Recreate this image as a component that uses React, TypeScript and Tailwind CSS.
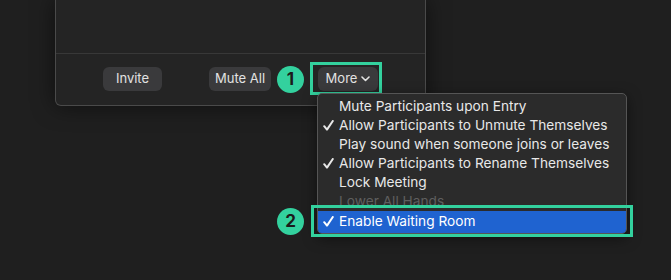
const font = { fontFamily: "Inter, 'Noto Sans', sans-serif" }

type Item = { label: string; checked?: boolean; disabled?: boolean }

const items: Item[] = [
  { label: "Mute Participants upon Entry" },
  { label: "Allow Participants to Unmute Themselves", checked: true },
  { label: "Play sound when someone joins or leaves" },
  { label: "Allow Participants to Rename Themselves", checked: true },
  { label: "Lock Meeting" },
  { label: "Lower All Hands", disabled: true },
]

function Check(props: { on?: boolean }) {
  return (
    <span className="flex w-[21px] items-center pl-[5px]">
      {props.on && (
        <svg width="11" height="11" viewBox="0 0 11 11" fill="none">
          <path d="M1.2 6.2L4 9.6L9.8 1" stroke="currentColor" strokeWidth="2" strokeLinecap="round" strokeLinejoin="round" />
        </svg>
      )}
    </span>
  )
}

function Badge(props: { n: number; className: string }) {
  return (
    <div
      className={`absolute flex h-[27px] w-[27px] items-center justify-center rounded-full bg-[#33d19e] text-[17px] font-bold text-[#1b1b1b] ${props.className}`}
    >
      {props.n}
    </div>
  )
}

export default function App() {
  return (
    <div className="relative h-[280px] w-[671px] overflow-hidden bg-[#1f1f1f]" style={font}>
      {/* participants panel */}
      <div className="ml-[55px] w-[371px] rounded-b-[6px] border-x border-b border-[#4a4a4a] bg-[#242424] shadow-[0_0_22px_rgba(0,0,0,0.55)]">
        <div className="h-[54px] border-b border-[#383838]" />
        <div className="flex h-[51px] items-center justify-evenly pb-[2px]">
          <button className="h-[24px] w-[59px] rounded-[6px] bg-[#3a3a3c] text-[13px] text-[#e2e2e2]">Invite</button>
          <button className="h-[24px] w-[62px] rounded-[6px] bg-[#3a3a3c] text-[13px] text-[#e2e2e2]">Mute All</button>
          <button className="flex h-[24px] w-[60px] items-center justify-center gap-[4px] rounded-[6px] bg-[#3a3a3c] text-[13px] text-[#e2e2e2]">
            More
            <svg width="9" height="6" viewBox="0 0 9 6" fill="none">
              <path d="M1 1l3.5 3.5L8 1" stroke="#e2e2e2" strokeWidth="1.6" strokeLinecap="round" strokeLinejoin="round" />
            </svg>
          </button>
        </div>
      </div>

      {/* annotation 1 */}
      <Badge n={1} className="left-[277px] top-[66px]" />
      <div className="absolute left-[310px] top-[62px] h-[33px] w-[72px] border-[3px] border-[#33d19e]" />

      {/* dropdown menu */}
      <div className="absolute left-[317px] top-[93px] w-[310px] rounded-[5px] border border-[#555] bg-[#2b2b2b] pt-[3px] text-[13.7px] text-[#e8e8e8] shadow-[0_4px_14px_rgba(0,0,0,0.5)]">
        {items.map((it) => (
          <div key={it.label} className={`flex h-[19px] items-center ${it.disabled ? "text-[#5f5f5f]" : ""}`}>
            <Check on={it.checked} />
            <span>{it.label}</span>
          </div>
        ))}
        <div className="flex h-[22px] items-center rounded-b-[4px] bg-[#1f63d0] pb-[2px] text-white">
          <Check on />
          <span>Enable Waiting Room</span>
        </div>
      </div>

      {/* annotation 2 */}
      <Badge n={2} className="left-[277px] top-[208px]" />
      <div className="absolute left-[311px] top-[205px] h-[32px] w-[322px] border-[3px] border-[#33d19e]" />
    </div>
  )
}
